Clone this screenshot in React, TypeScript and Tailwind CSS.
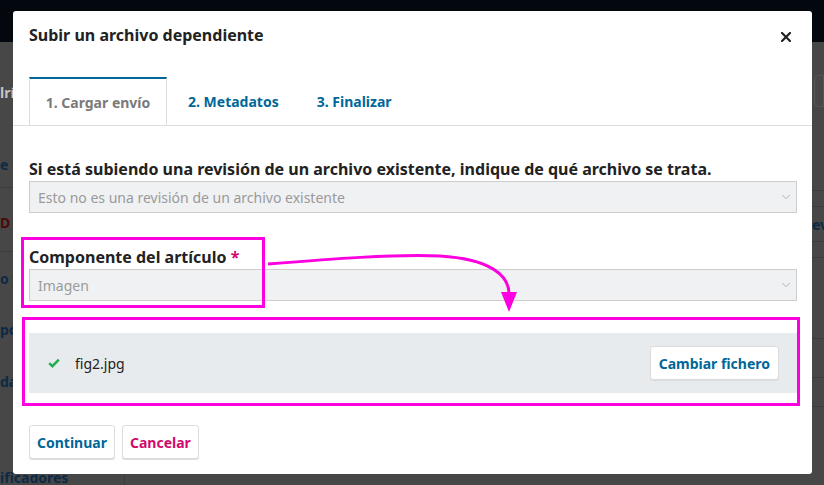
import { ChevronDown } from "lucide-react";

const font = { fontFamily: '"Noto Sans", "Open Sans", sans-serif' };

function Backdrop() {
  return (
    <div className="absolute inset-0 flex flex-col bg-[#474747]">
      <div className="h-[42px] bg-[#03070e]" />
      <div className="flex flex-1">
        <div className="flex w-[125px] flex-col border-r border-[#3c3c3c] text-[14px] font-bold text-[#0f1e2e]">
          <div className="h-[40px] pt-[40px] text-[#c4c4c4]">lrí</div>
          <div className="mt-[72px] border-b border-[#3c3c3c] pb-[12px] text-[#0d2a44]">e t</div>
          <div className="mt-[24px] border-b border-[#3c3c3c] pb-[18px] text-[#4a0a0a]">D</div>
          <div className="mt-[16px] text-[#0d2a44]">o y</div>
          <div className="mt-[30px] text-[#0d2a44]">po</div>
          <div className="mt-[31px] text-[#0d2a44]">da</div>
          <div className="mt-auto translate-y-[3px] text-[#0d2a44]">ificadores</div>
        </div>
        <div className="flex flex-1 flex-col items-end">
          <div className="mt-[33px] h-[32px] w-[10px] rounded-l-sm border border-[#555]" />
          <div className="mt-[83px] h-px w-[12px] bg-[#3c3c3c]" />
          <div className="mt-[15px] h-px w-[12px] bg-[#3c3c3c]" />
          <div className="mt-[8px] w-[12px] overflow-hidden whitespace-nowrap text-[14px] font-bold leading-[20px] text-[#0d2a44]">ev</div>
          <div className="mt-[6px] h-px w-[12px] bg-[#3c3c3c]" />
          <div className="mt-[15px] h-px w-[12px] bg-[#3c3c3c]" />
          <div className="mt-[80px] h-px w-[12px] bg-[#3c3c3c]" />
          <div className="mt-[38px] h-px w-[12px] bg-[#3c3c3c]" />
          <div className="mt-[28px] h-px w-[12px] bg-[#3c3c3c]" />
        </div>
      </div>
    </div>
  );
}

function Select({ value }: { value: string }) {
  return (
    <div className="flex h-[32px] items-center justify-between border border-[#cdcdcd] bg-[#f0f1f3] pl-[8px] pr-[3px] text-[14px] text-[#9a9a9a]">
      <span>{value}</span>
      <ChevronDown size={14} strokeWidth={1.5} className="text-[#a8a8a8]" />
    </div>
  );
}

function Modal() {
  return (
    <div className="absolute left-[13px] top-[11px] w-[799px] rounded-[3px] bg-white" style={font}>
      <div className="flex h-[48px] items-center justify-between px-[16px]">
        <h1 className="text-[16px] font-bold text-[#222]">Subir un archivo dependiente</h1>
        <svg width="10" height="10" viewBox="0 0 10 10" className="mr-[5px] mt-[4px]">
          <path d="M1 1 L9 9 M9 1 L1 9" stroke="#222" strokeWidth="2.2" strokeLinecap="square" />
        </svg>
      </div>
      <div className="mt-[18px] flex border-b border-[#dddddd] pl-[16px]">
        <div className="-mb-px flex h-[48px] w-[138px] items-center justify-center border-x border-t-2 border-x-[#dddddd] border-t-[#006798] bg-white text-[14px] font-bold text-[#7a7a7a]">
          1. Cargar envío
        </div>
        <div className="flex h-[48px] items-center pl-[21px] pr-[21px] text-[14px] font-bold text-[#006798]">2. Metadatos</div>
        <div className="flex h-[48px] items-center pl-[17px] text-[14px] font-bold text-[#006798]">3. Finalizar</div>
      </div>
      <div className="pb-[15px] pl-[16px] pr-[15px] pt-[33px]">
        <div className="mb-[2px] text-[16px] font-bold leading-[20px] text-[#222]">
          Si está subiendo una revisión de un archivo existente, indique de qué archivo se trata.
        </div>
        <Select value="Esto no es una revisión de un archivo existente" />
        <div className="mb-[2px] mt-[34px] text-[16px] font-bold leading-[20px] text-[#222]">
          Componente del artículo <span className="text-[#d00a6c]">*</span>
        </div>
        <Select value="Imagen" />
        <div className="mt-[32px] flex h-[60px] items-center bg-[#e8ebed] pl-[19px] pr-[18px]">
          <svg width="12" height="10" viewBox="0 0 12 10">
            <path d="M1.2 5.2 L4.4 8.2 L10.8 1.6" stroke="#1fae4f" strokeWidth="2.4" fill="none" />
          </svg>
          <span className="ml-[15px] text-[14px] text-[#222]">fig2.jpg</span>
          <button className="ml-auto h-[34px] rounded-[3px] border border-[#dcdcdc] bg-white px-[8px] text-[14px] font-bold text-[#006798] shadow-[0_1px_0_#dcdcdc]">
            Cambiar fichero
          </button>
        </div>
        <div className="mt-[32px] flex gap-[7px]">
          <button className="h-[34px] rounded-[3px] border border-[#dcdcdc] bg-white px-[7px] text-[14px] font-bold text-[#006798] shadow-[0_1px_0_#dcdcdc]">
            Continuar
          </button>
          <button className="h-[34px] rounded-[3px] border border-[#dcdcdc] bg-white px-[7px] text-[14px] font-bold text-[#d00a6c] shadow-[0_1px_0_#dcdcdc]">
            Cancelar
          </button>
        </div>
      </div>
    </div>
  );
}

function Annotations() {
  return (
    <>
      <div className="pointer-events-none absolute left-[21px] top-[237px] h-[71px] w-[244px] border-[3px] border-[#fc00e0]" />
      <div className="pointer-events-none absolute left-[22px] top-[317px] h-[89px] w-[778px] border-[3px] border-[#fc00e0]" />
      <svg className="pointer-events-none absolute left-0 top-0" width="824" height="485">
        <path d="M268 264 C 330 259, 395 254, 440 256 C 488 259, 509 274, 509 294" stroke="#fc00e0" strokeWidth="3" fill="none" />
        <polygon points="501,292 517,292 509,312" fill="#fc00e0" />
      </svg>
    </>
  );
}

export default function App() {
  return (
    <div className="relative h-[485px] w-[824px] overflow-hidden" style={font}>
      <Backdrop />
      <Modal />
      <Annotations />
    </div>
  );
}
